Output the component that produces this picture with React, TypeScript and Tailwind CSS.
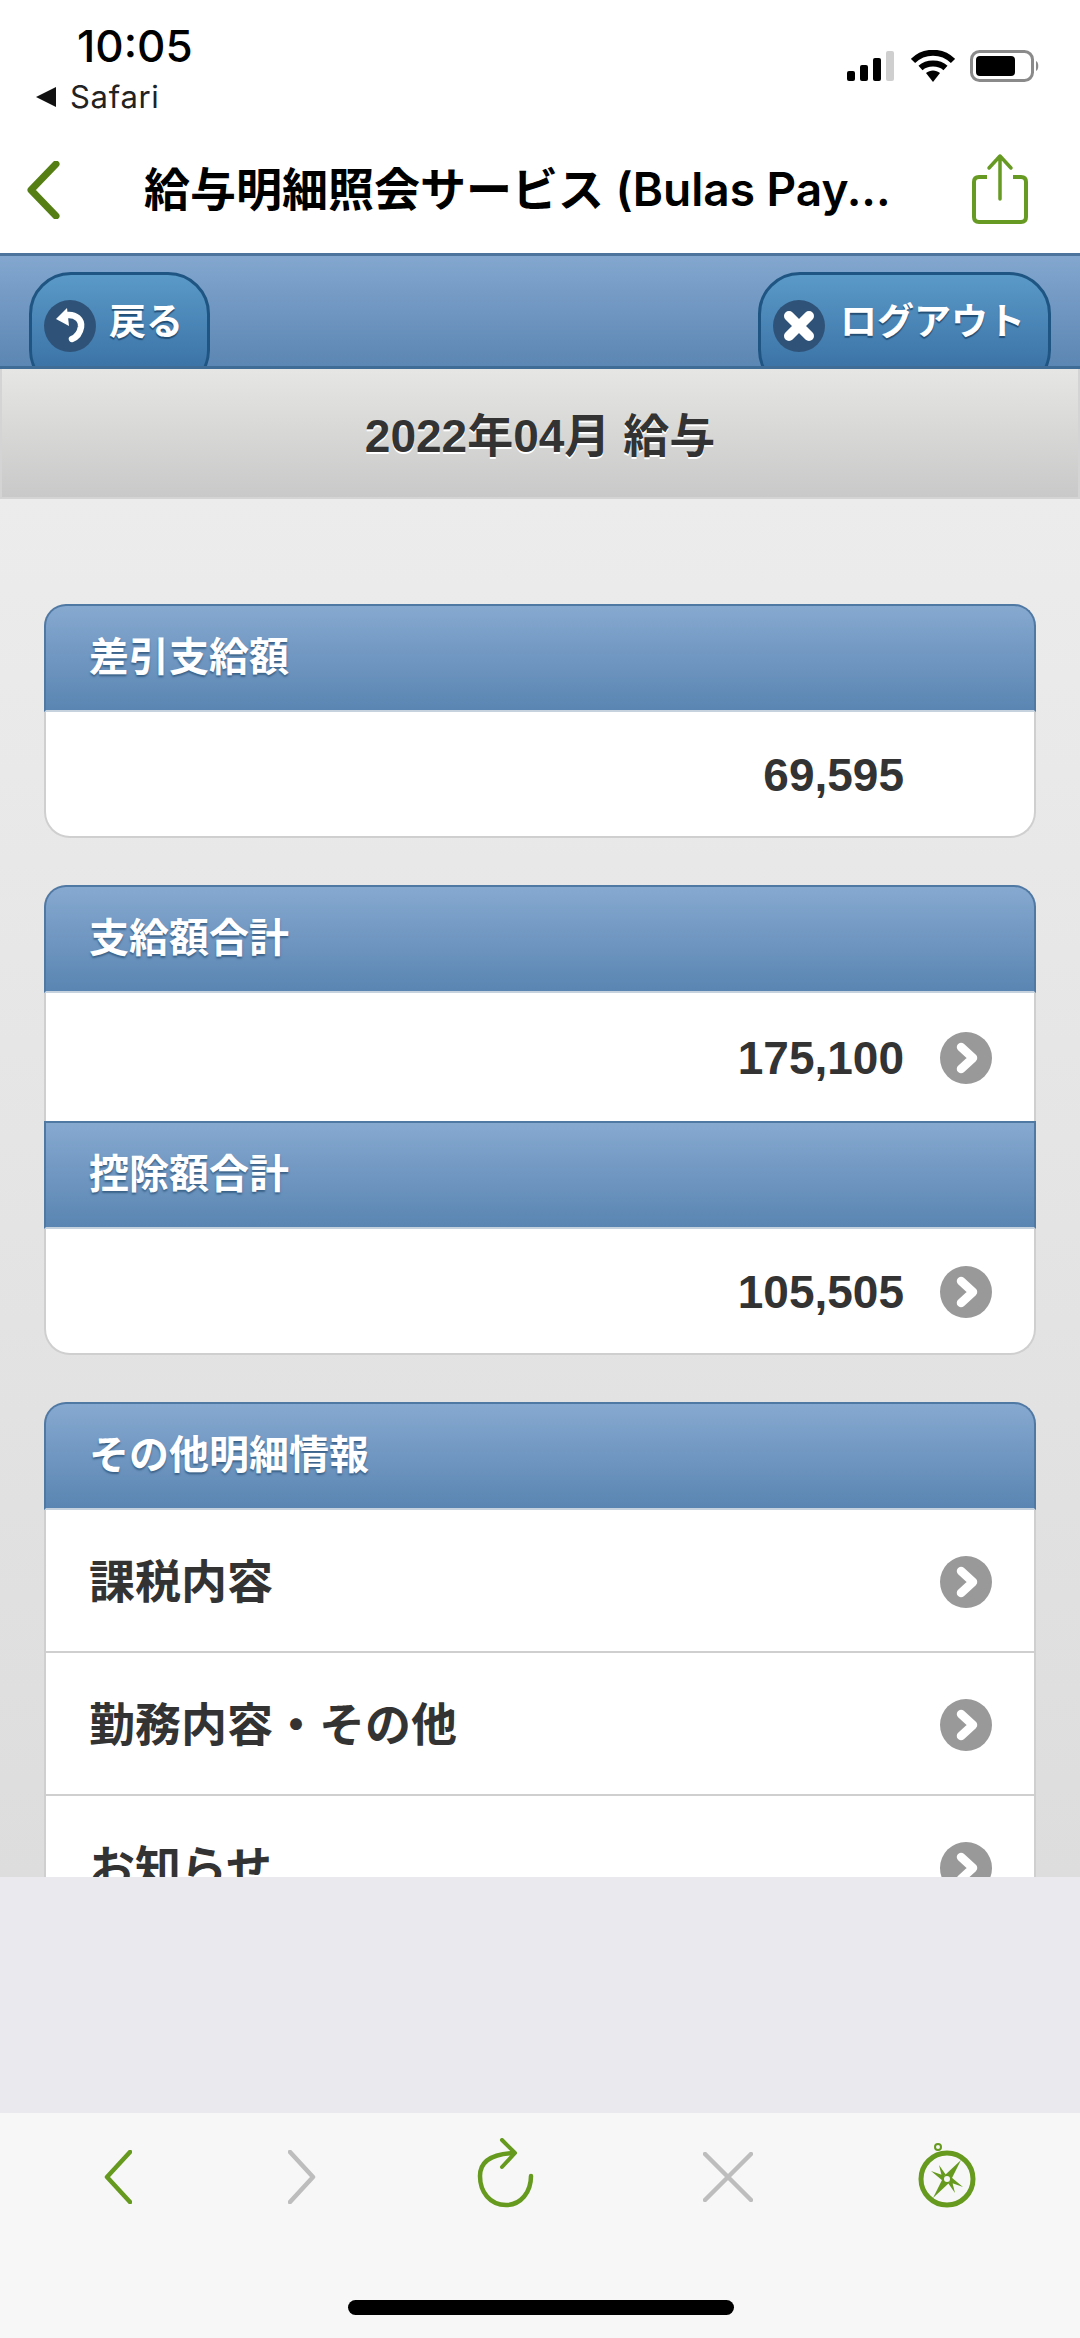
import React from 'react';

function Chevron() {
  return (
    <svg width="52" height="52" viewBox="0 0 52 52" className="shrink-0">
      <circle cx="26" cy="26" r="26" fill="#999999" />
      <path d="M21 15 L33 26 L21 37" fill="none" stroke="#fff" strokeWidth="8.5" strokeLinejoin="round" strokeLinecap="round" />
    </svg>
  );
}

function SectionHead({ title, rounded }: { title: string; rounded?: boolean }) {
  return (
    <div className={`h-[108px] flex items-center pl-[43px] pb-[3px] text-[40px] leading-none font-bold text-white bg-gradient-to-b from-[#86a9d0] to-[#5a85b2] border-t-2 border-x-2 border-[#4f78a3] border-b-2 border-b-[#c6d2de] [text-shadow:0_2px_2px_#3a6288] ${rounded ? 'rounded-t-[22px]' : ''}`}>
      {title}
    </div>
  );
}

function AmountRow({ value, arrow, last }: { value: string; arrow?: boolean; last?: boolean }) {
  return (
    <div className={`flex items-center justify-end bg-white border-x-2 border-[#cfcfcf] pr-[42px] pt-[2px] ${last ? 'h-[126px] border-b-2 rounded-b-[26px]' : 'h-[128px]'}`}>
      <span className="text-[46px] leading-none font-bold text-[#333333]">{value}</span>
      <span className="w-[36px] shrink-0" />
      {arrow ? <Chevron /> : <span className="w-[52px] shrink-0" />}
    </div>
  );
}

function LinkRow({ label }: { label: string }) {
  return (
    <div className="h-[143px] flex items-center justify-between bg-white border-x-2 border-b-2 border-[#cfcfcf] pl-[43px] pr-[42px] pt-[2px]">
      <span className="text-[46px] leading-none font-bold text-[#333333]">{label}</span>
      <Chevron />
    </div>
  );
}

export default function App() {
  return (
    <div className="w-[1080px] h-[2338px] flex flex-col overflow-hidden bg-white [font-family:'Liberation_Sans','Noto_Sans_CJK_JP',sans-serif]">
      {/* status bar */}
      <div className="h-[135px] shrink-0 flex justify-between">
        <div className="pl-[35px] pt-[23px]">
          <div className="pl-[42px] text-[44px] leading-[46px] font-medium text-black [font-family:Inter,sans-serif]">10:05</div>
          <div className="flex items-center gap-[13px] mt-[11px]">
            <svg width="22" height="22" viewBox="0 0 22 22"><path d="M21 1 V21 L1 11 Z" fill="#111" /></svg>
            <span className="text-[31px] leading-[34px] text-[#222] tracking-[0.7px] [font-family:Inter,sans-serif]">Safari</span>
          </div>
        </div>
        <div className="flex items-start gap-[15px] pt-[50px] pr-[40px]">
          <svg width="49" height="32" viewBox="0 0 49 32">
            <rect x="0" y="21" width="8" height="10" rx="2" fill="#000" />
            <rect x="13" y="15" width="8" height="16" rx="2" fill="#000" />
            <rect x="26" y="8" width="8" height="23" rx="2" fill="#000" />
            <rect x="39" y="1" width="8" height="30" rx="2" fill="#cfcfcf" />
          </svg>
          <svg width="44" height="32" viewBox="0 0 44 32">
            <path d="M2 11 C13 0 31 0 42 11" fill="none" stroke="#000" strokeWidth="6" />
            <path d="M9.5 18 C16 12 28 12 34.5 18" fill="none" stroke="#000" strokeWidth="6" />
            <path d="M15 23 C19 19.5 25 19.5 29 23 L22 32 Z" fill="#000" />
          </svg>
          <svg width="70" height="32" viewBox="0 0 70 32">
            <rect x="1.5" y="1.5" width="61" height="29" rx="8" fill="none" stroke="#8a8a8a" strokeWidth="3" />
            <rect x="6" y="6" width="39" height="20" rx="4" fill="#000" />
            <path d="M66 11 C69 12 69 20 66 21 Z" fill="#8a8a8a" />
          </svg>
        </div>
      </div>

      {/* nav bar */}
      <div className="h-[118px] shrink-0 flex items-start relative">
        <svg width="34" height="58" viewBox="0 0 34 58" className="ml-[26px] mt-[26px] shrink-0">
          <path d="M30 3 L5 29 L30 55" fill="none" stroke="#557f14" strokeWidth="7" strokeLinecap="round" strokeLinejoin="round" />
        </svg>
        <div className="ml-[84px] mt-[26px] text-[46px] leading-[56px] font-semibold text-black whitespace-nowrap [font-family:Inter,'Noto_Sans_CJK_JP',sans-serif]">給与明細照会サービス (Bulas Pay...</div>
        <svg width="56" height="72" viewBox="0 0 56 72" className="absolute left-[972px] top-[18px]">
          <path d="M15 24 H7 Q2 24 2 29 V64 Q2 69 7 69 H49 Q54 69 54 64 V29 Q54 24 49 24 H41" fill="none" stroke="#679a22" strokeWidth="4" />
          <path d="M28 46 V3 M17 15 L28 3 L39 15" fill="none" stroke="#679a22" strokeWidth="3.5" strokeLinecap="round" strokeLinejoin="round" />
        </svg>
      </div>

      {/* header */}
      <div className="h-[116px] shrink-0 overflow-hidden flex justify-between px-[29px] pt-[16px] bg-gradient-to-b from-[#83a7cf] to-[#5c86b3] border-t-[3px] border-t-[#4d749c] border-b-[3px] border-b-[#3f6b97]">
        <div className="w-[181px] h-[120px] shrink-0 flex items-start pl-[12px] pt-[25px] gap-[13px] rounded-[42px] border-[3px] border-[#1f5582] bg-gradient-to-b from-[#5a9ac8] to-[#356a9f]">
          <svg width="52" height="52" viewBox="0 0 52 52" className="shrink-0">
            <circle cx="26" cy="26" r="26" fill="#2f5378" />
            <path d="M12 19 L23 8 L25 26 Z" fill="#fff" />
            <path d="M23 15 C32 14 38 20 37 27 C36 33 33 37 28 39" fill="none" stroke="#fff" strokeWidth="6.5" strokeLinecap="round" />
          </svg>
          <span className="text-[37px] leading-[46px] font-bold text-white [text-shadow:0_2px_1px_#234e75]">戻る</span>
        </div>
        <div className="w-[293px] h-[120px] shrink-0 flex items-start pl-[12px] pt-[25px] gap-[15px] rounded-[42px] border-[3px] border-[#1f5582] bg-gradient-to-b from-[#5a9ac8] to-[#356a9f]">
          <svg width="52" height="52" viewBox="0 0 52 52" className="shrink-0">
            <circle cx="26" cy="26" r="26" fill="#2f5378" />
            <path d="M16 16 L36 36 M36 16 L16 36" stroke="#fff" strokeWidth="10" strokeLinecap="round" />
          </svg>
          <span className="text-[37px] leading-[46px] font-bold text-white whitespace-nowrap [text-shadow:0_2px_1px_#234e75]">ログアウト</span>
        </div>
      </div>

      {/* page title */}
      <div className="h-[130px] shrink-0 flex items-center justify-center pt-[6px] bg-gradient-to-b from-[#e6e6e4] to-[#c9c9c9] border-x-2 border-b-2 border-[#d4d4d4] text-[46px] leading-none font-bold text-[#333333] [text-shadow:0_2px_0_#ffffff]">
        2022年04月 給与
      </div>

      {/* content */}
      <div className="flex-1 min-h-0 overflow-hidden px-[44px] pt-[105px] flex flex-col gap-[47px] bg-gradient-to-b from-[#ececec] to-[#dddddd]">
        <div>
          <SectionHead title="差引支給額" rounded />
          <AmountRow value="69,595" last />
        </div>
        <div>
          <SectionHead title="支給額合計" rounded />
          <AmountRow value="175,100" arrow />
          <SectionHead title="控除額合計" />
          <AmountRow value="105,505" arrow last />
        </div>
        <div>
          <SectionHead title="その他明細情報" rounded />
          <LinkRow label="課税内容" />
          <LinkRow label="勤務内容・その他" />
          <LinkRow label="お知らせ" />
        </div>
      </div>

      {/* empty web view area */}
      <div className="h-[236px] shrink-0 bg-[#e9e9ee]" />

      {/* toolbar */}
      <div className="h-[225px] shrink-0 bg-[#f7f7f7] flex flex-col">
        <div className="h-[187px] relative">
          <svg width="28" height="54" viewBox="0 0 28 54" className="absolute left-[104px] top-[37px]">
            <path d="M26 2 L3 27 L26 52" fill="none" stroke="#669a1f" strokeWidth="4.5" strokeLinecap="round" strokeLinejoin="round" />
          </svg>
          <svg width="28" height="54" viewBox="0 0 28 54" className="absolute left-[288px] top-[37px]">
            <path d="M2 2 L25 27 L2 52" fill="none" stroke="#bdbdbd" strokeWidth="4.5" strokeLinecap="round" strokeLinejoin="round" />
          </svg>
          <svg width="58" height="70" viewBox="0 0 58 70" className="absolute left-[477px] top-[25px]">
            <path d="M54 38 C54 54 44 67 29 67 C13 67 3 54 3 38 C3 24 13 16 37 15" fill="none" stroke="#669a1f" strokeWidth="4.5" strokeLinecap="round" />
            <path d="M25 2 L38 15 L25 29" fill="none" stroke="#669a1f" strokeWidth="4" strokeLinecap="round" strokeLinejoin="round" />
          </svg>
          <svg width="50" height="50" viewBox="0 0 50 50" className="absolute left-[703px] top-[39px]">
            <path d="M2 2 L48 48 M48 2 L2 48" stroke="#bdbdbd" strokeWidth="4.5" strokeLinecap="round" />
          </svg>
          <svg width="60" height="66" viewBox="0 0 60 66" className="absolute left-[917px] top-[30px]">
            <circle cx="21" cy="4" r="3" fill="none" stroke="#669a1f" strokeWidth="2" />
            <circle cx="30" cy="36" r="26" fill="none" stroke="#669a1f" strokeWidth="5" />
            <path d="M44 17 L33 39 L27 33 Z" fill="#669a1f" />
            <path d="M16 55 L27 33 L33 39 Z" fill="#669a1f" />
            <path d="M14 28 L28 33 L26 38 Z M46 44 L32 39 L34 34 Z M22 22 L29 32 L25 34 Z M38 50 L31 40 L35 38 Z" fill="#669a1f" />
            <circle cx="30" cy="36" r="3" fill="#f7f7f7" />
          </svg>
        </div>
        <div className="flex justify-center">
          <div className="w-[386px] h-[15px] rounded-full bg-black ml-[2px]" />
        </div>
      </div>
    </div>
  );
}
